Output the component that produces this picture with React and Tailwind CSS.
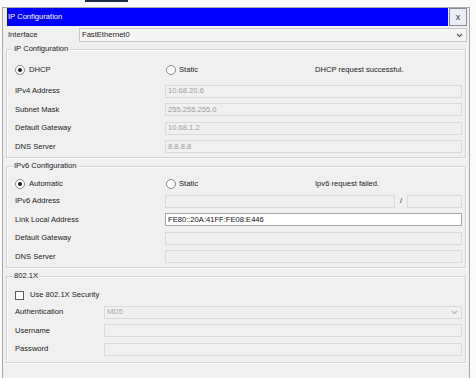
import React from 'react';

function Chevron({ color = '#555' }) {
  return (
    <svg width="7" height="5" viewBox="0 0 7 5" className="shrink-0">
      <polyline points="1,1 3.5,3.5 6,1" fill="none" stroke={color} strokeWidth="1.1" />
    </svg>
  );
}

function Radio({ checked }) {
  return (
    <span className="w-[10px] h-[10px] rounded-full border border-[#8a8a8a] bg-white flex items-center justify-center shrink-0">
      {checked && <span className="w-[4px] h-[4px] rounded-full bg-[#1a1a1a]" />}
    </span>
  );
}

function Box({ value, white, className = '' }) {
  const look = white
    ? 'bg-white border-[#a6a6a6] text-[#111]'
    : 'bg-[#f0f0f0] border-[#dadada] text-[#9c9c9c]';
  return (
    <div className={`h-[13px] border flex items-center pl-[2px] ${look} ${className}`}>
      {value}
    </div>
  );
}

function Row({ label, value, white, wide }) {
  return (
    <div className="flex items-center h-[18.5px]">
      <div className={wide ? 'w-[150px] shrink-0' : 'w-[89px] shrink-0'}>{label}</div>
      <Box value={value} white={white} className="flex-1" />
    </div>
  );
}

function Group({ title, className = '', children }) {
  return (
    <div className={`relative border border-[#d3d3d3] shadow-[inset_1px_1px_0_#fbfbfb,1px_1px_0_#fbfbfb] mx-[3px] pl-[8px] pr-[3px] ${className}`}>
      <span className="absolute left-[5px] -top-[6px] px-[2px] bg-[#f0f0f0] leading-[10px]">{title}</span>
      {children}
    </div>
  );
}

function ModeRow({ first, status }) {
  return (
    <div className="flex items-center h-[16px]">
      <div className="w-[151px] flex items-center gap-[4px]">
        <Radio checked />
        <span>{first}</span>
      </div>
      <div className="w-[149px] flex items-center gap-[3px]">
        <Radio />
        <span>Static</span>
      </div>
      <span>{status}</span>
    </div>
  );
}

export default function App() {
  return (
    <div className="w-[476px] h-[378px] bg-[#fafafa] overflow-hidden font-['Liberation_Sans',Arial,sans-serif] text-[7.6px] leading-[10px] text-[#222]">
      <div className="h-[7px]">
        <div className="ml-[85px] w-[43px] h-[2px] bg-[#1b2a47]" />
      </div>
      <div className="ml-[2px] w-[468px] h-[371px] border-l border-t border-r border-[#a9a9a9] bg-[#f0f0f0]">
        <div className="flex h-[18px] pl-[4px] pr-[2px]">
          <div className="flex-1 bg-[#0000ff] text-white flex items-center pl-[1px]">IP Configuration</div>
          <div className="w-[18px] ml-[1px] bg-[#eceef6] border border-[#8a8a96] flex items-center justify-center text-[#333] text-[9px]">x</div>
        </div>

        <div className="flex items-center mt-[2px] h-[14px] pl-[5px] pr-[2px]">
          <div className="w-[71px] shrink-0">Interface</div>
          <div className="flex-1 h-[14px] border border-[#c9c9c9] bg-[#f5f5f5] flex items-center justify-between pl-[2px] pr-[3px]">
            <span>FastEthernet0</span>
            <Chevron />
          </div>
        </div>

        <Group title="IP Configuration" className="mt-[7px] pt-[12px] pb-[1px]">
          <ModeRow first="DHCP" status="DHCP request successful." />
          <div className="mt-[4px]">
            <Row wide label="IPv4 Address" value="10.68.20.6" />
            <Row wide label="Subnet Mask" value="255.255.255.0" />
            <Row wide label="Default Gateway" value="10.68.1.2" />
            <Row wide label="DNS Server" value="8.8.8.8" />
          </div>
        </Group>

        <Group title="IPv6 Configuration" className="mt-[8px] pt-[9px] pb-[1px]">
          <ModeRow first="Automatic" status="Ipv6 request failed." />
          <div className="flex items-center h-[18.5px]">
            <div className="w-[150px] shrink-0">IPv6 Address</div>
            <Box className="w-[230px]" />
            <span className="w-[12px] text-center">/</span>
            <Box className="flex-1" />
          </div>
          <Row wide white label="Link Local Address" value="FE80::20A:41FF:FE08:E446" />
          <Row wide label="Default Gateway" />
          <Row wide label="DNS Server" />
        </Group>

        <Group title="802.1X" className="mt-[8px] pt-[10px] pb-[3px]">
          <div className="flex items-center h-[16px] gap-[6px]">
            <span className="w-[9px] h-[9px] border border-[#5a5a5a] bg-white shrink-0" />
            <span>Use 802.1X Security</span>
          </div>
          <div className="flex items-center h-[18.5px]">
            <div className="w-[89px] shrink-0">Authentication</div>
            <div className="flex-1 h-[13px] border border-[#dadada] bg-[#f0f0f0] text-[#a8a8a8] flex items-center justify-between pl-[2px] pr-[3px]">
              <span>MD5</span>
              <Chevron color="#b5b5b5" />
            </div>
          </div>
          <Row label="Username" />
          <Row label="Password" />
        </Group>
      </div>
    </div>
  );
}
